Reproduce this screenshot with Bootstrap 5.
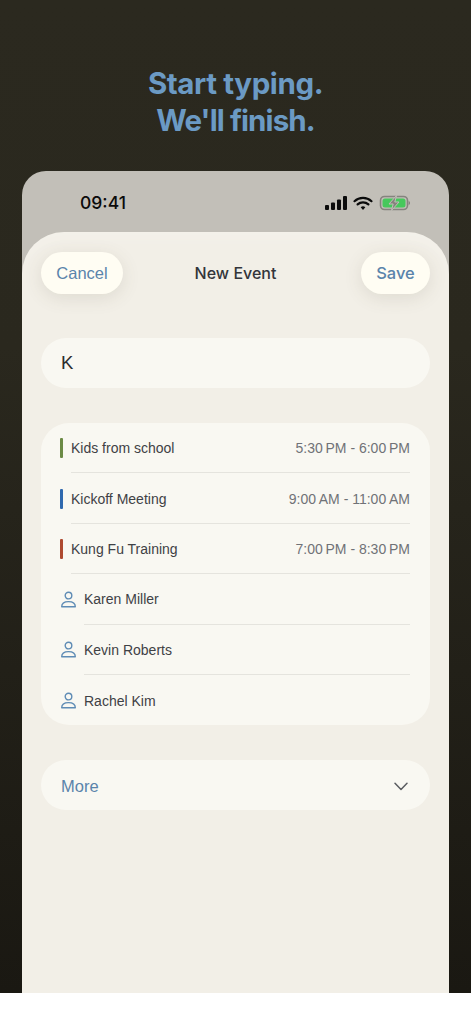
<!DOCTYPE html>
<html lang="en">
<head>
<meta charset="utf-8">
<meta name="viewport" content="width=device-width, initial-scale=1">
<link href="https://cdn.jsdelivr.net/npm/bootstrap@5.3.0/dist/css/bootstrap.min.css" rel="stylesheet">
<style>
html,body{background:#fff;}
body{font-family:"Liberation Sans",Arial,sans-serif;color:#35373a;}
.stage{height:993px;overflow:hidden;background:linear-gradient(180deg,#2b291f 0%,#2a281e 35%,#1a1812 100%);padding:65px 22px 0;}
.headline{font-family:Inter,"Liberation Sans",sans-serif;font-weight:700;font-size:29.5px;line-height:37px;color:#6b9ac4;text-align:center;margin:0 0 32px;height:74px;}
.headline-a{display:block;letter-spacing:-.4px;}
.headline-b{display:block;letter-spacing:-.9px;}
.phone{height:822px;background:#c2bfb8;border-radius:24px 24px 0 0;overflow:hidden;}
.statusline{height:63px;padding:1px 39px 0 58px;}
.clock{font-family:Inter,sans-serif;font-weight:500;font-size:17.5px;color:#0b0b0b;padding-top:1px;}
.sheet{height:761px;margin-top:-2px;background:#f2efe7;border-radius:42px 42px 0 0;padding:20px 19px 0;box-shadow:inset 0 14px 22px -14px rgba(255,255,255,.3);}
.sheet-top{display:grid;grid-template-columns:1fr auto 1fr;align-items:center;}
.pillbtn{height:42px;border-radius:21px;background:#fffdf3;border:0;color:#5a84ab;font-size:16.5px;padding:0;box-shadow:0 4px 18px rgba(90,84,60,.13);}
.pill-cancel{width:82px;justify-self:start;}
.pill-save{width:69px;justify-self:end;font-family:Inter,sans-serif;font-weight:500;font-size:16.5px;}
.sheet-title{font-family:Inter,sans-serif;font-weight:500;font-size:16px;color:#33353a;}
.typed{height:50px;margin-top:44px;background:#f9f8f2;border-radius:25px;padding:0 20px;font-size:18.5px;color:#2c2d2f;}
.results{margin-top:35px;background:#f9f8f2;border-radius:28px;padding:0 20px 0 19px;height:302px;}
.result-row{height:50.4px;font-size:14px;color:#3f4145;}
.result-body{height:100%;padding-top:2px;border-bottom:1px solid #e5e4de;}
.result-row:last-child .result-body{border-bottom:0;}
.tick{width:3px;height:20px;border-radius:1px;margin-right:8px;flex:none;}
.tick-green{background:#6b8a45;}
.tick-blue{background:#2f69ae;}
.tick-red{background:#ae4a30;}
.person{width:17px;height:17px;margin-right:7px;flex:none;}
.when{font-size:14px;color:#707277;}
.moreline{height:50px;margin-top:35px;background:#f9f8f2;border-radius:25px;padding:2px 22px 0 20px;font-size:16.5px;color:#5a84ab;}
</style>
</head>
<body>
<div class="stage">
  <h1 class="headline"><span class="headline-a">Start typing.</span><span class="headline-b">We'll finish.</span></h1>
  <div class="phone">
    <div class="statusline d-flex justify-content-between align-items-center">
      <span class="clock">09:41</span>
      <svg width="85" height="16" viewBox="0 0 85 16" aria-hidden="true">
        <g fill="#0b0b0b">
          <rect x="0" y="10" width="4" height="5" rx="1"/>
          <rect x="6" y="7.5" width="4" height="7.5" rx="1"/>
          <rect x="12" y="4.5" width="4" height="10.5" rx="1"/>
          <rect x="18" y="1" width="4" height="14" rx="1"/>
        </g>
        <g fill="none" stroke="#0b0b0b" stroke-width="2.2" stroke-linecap="round">
          <path d="M29.5 6.2a12.5 12.5 0 0 1 17 0"/>
          <path d="M32.6 9.4a8 8 0 0 1 10.8 0"/>
        </g>
        <path d="M35.7 12.2a3.6 3.6 0 0 1 4.6 0L38 15z" fill="#0b0b0b"/>
        <rect x="55.5" y="1.5" width="27" height="13" rx="4" fill="none" stroke="#85837e" stroke-width="1.6"/>
        <path d="M83.6 6v4c.9-.3 1.4-1.100 1.400-2s-.5-1.700-1.400-2z" fill="#85837e"/>
        <rect x="57.500" y="3.500" width="23" height="9" rx="2.500" fill="#46c85c"/>
        <path d="M71.500 0.500 64 9h4.200l-1.700 6.500L74 7h-4.200z" fill="#85837e" stroke="#c2bfb8" stroke-width="1"/>
      </svg>
    </div>
    <div class="sheet">
      <div class="sheet-top">
        <button type="button" class="btn pillbtn pill-cancel">Cancel</button>
        <span class="sheet-title">New Event</span>
        <button type="button" class="btn pillbtn pill-save">Save</button>
      </div>
      <div class="typed d-flex align-items-center">K</div>
      <div class="results">
        <div class="result-row d-flex align-items-center">
          <span class="tick tick-green"></span>
          <div class="result-body flex-grow-1 d-flex justify-content-between align-items-center"><span>Kids from school</span><span class="when">5:30&#8201;PM - 6:00&#8201;PM</span></div>
        </div>
        <div class="result-row d-flex align-items-center">
          <span class="tick tick-blue"></span>
          <div class="result-body flex-grow-1 d-flex justify-content-between align-items-center"><span>Kickoff Meeting</span><span class="when">9:00&#8201;AM - 11:00&#8201;AM</span></div>
        </div>
        <div class="result-row d-flex align-items-center">
          <span class="tick tick-red"></span>
          <div class="result-body flex-grow-1 d-flex justify-content-between align-items-center"><span>Kung Fu Training</span><span class="when">7:00&#8201;PM - 8:30&#8201;PM</span></div>
        </div>
        <div class="result-row d-flex align-items-center">
          <svg class="person" viewBox="0 0 17 17" fill="none" stroke="#5f8cb5" stroke-width="1.400" aria-hidden="true"><circle cx="8.500" cy="4.600" r="3.300"/><path d="M1.700 15.800c0-3.200 2.500-5.200 6.800-5.200s6.800 2 6.800 5.200z" stroke-linejoin="round"/></svg>
          <div class="result-body flex-grow-1 d-flex align-items-center"><span>Karen Miller</span></div>
        </div>
        <div class="result-row d-flex align-items-center">
          <svg class="person" viewBox="0 0 17 17" fill="none" stroke="#5f8cb5" stroke-width="1.400" aria-hidden="true"><circle cx="8.500" cy="4.600" r="3.300"/><path d="M1.700 15.800c0-3.200 2.500-5.200 6.800-5.200s6.800 2 6.800 5.200z" stroke-linejoin="round"/></svg>
          <div class="result-body flex-grow-1 d-flex align-items-center"><span>Kevin Roberts</span></div>
        </div>
        <div class="result-row d-flex align-items-center">
          <svg class="person" viewBox="0 0 17 17" fill="none" stroke="#5f8cb5" stroke-width="1.400" aria-hidden="true"><circle cx="8.500" cy="4.600" r="3.300"/><path d="M1.700 15.800c0-3.200 2.500-5.200 6.800-5.200s6.800 2 6.800 5.200z" stroke-linejoin="round"/></svg>
          <div class="result-body flex-grow-1 d-flex align-items-center"><span>Rachel Kim</span></div>
        </div>
      </div>
      <div class="moreline d-flex justify-content-between align-items-center">
        <span>More</span>
        <svg width="14" height="9" viewBox="0 0 14 9" fill="none" stroke="#5b5d61" stroke-width="1.500" stroke-linecap="round" stroke-linejoin="round" aria-hidden="true"><path d="M1 1.200l6 6.300 6-6.300"/></svg>
      </div>
    </div>
  </div>
</div>
<script src="https://cdn.jsdelivr.net/npm/bootstrap@5.3.0/dist/js/bootstrap.bundle.min.js"></script>
</body>
</html>
